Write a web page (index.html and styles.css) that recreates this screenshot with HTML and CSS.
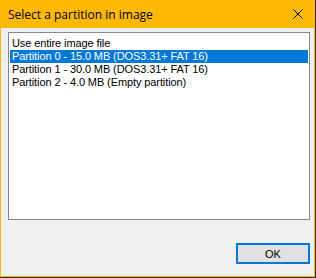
FILE: index.html
```html
<!DOCTYPE html>
<html lang="en">
<head>
    <meta charset="UTF-8">
    <title>Select a partition in image</title>
    <link rel="stylesheet" href="styles.css">
</head>
<body>
    <div class="window">
        <div class="titlebar">
            <span class="title">Select a partition in image</span>
            <span class="close">
                <svg width="10" height="10" viewBox="0 0 10 10">
                    <path d="M0.5 0.5 L9.5 9.5 M9.5 0.5 L0.5 9.5" stroke="#000" stroke-width="1" fill="none"/>
                </svg>
            </span>
        </div>
        <div class="client">
            <ul class="listbox">
                <li>Use entire image file</li>
                <li class="selected">Partition 0 - 15.0 MB (DOS3.31+ FAT 16)</li>
                <li>Partition 1 - 30.0 MB (DOS3.31+ FAT 16)</li>
                <li>Partition 2 - 4.0 MB (Empty partition)</li>
            </ul>
            <div class="buttons">
                <button class="button">OK</button>
            </div>
        </div>
    </div>
</body>
</html>
```

FILE: styles.css
```css
body {
    margin: 0;
    background-color: #2b2b2b;
    font-family: "Liberation Sans", Arial, sans-serif;
}
.window {
    width: 313px;
    height: 276px;
    border: 1px solid #ffb900;
    border-top: none;
    background-color: #f0f0f0;
    display: flex;
    flex-direction: column;
}
.titlebar {
    height: 28px;
    background-color: #ffb900;
    display: flex;
    align-items: center;
    justify-content: space-between;
    margin: 0 -1px;
}
.title {
    font-family: "Open Sans", sans-serif;
    font-size: 12px;
    color: #000;
    padding-left: 8px;
}
.close {
    width: 10px;
    height: 10px;
    margin-right: 12px;
    display: flex;
}
.client {
    flex: 1;
    display: flex;
    flex-direction: column;
    padding: 4px 4px 0 7px;
}
.listbox {
    list-style: none;
    margin: 0;
    padding: 4px 1px 2px;
    height: 180px;
    border: 1px solid #828790;
    background-color: #fff;
    font-size: 11px;
    letter-spacing: -0.1px;
}
.listbox li {
    height: 13px;
    line-height: 13px;
    padding-left: 2px;
    color: #000;
    white-space: nowrap;
}
.listbox li.selected {
    background-color: #0078d7;
    color: #fff;
}
.buttons {
    display: flex;
    justify-content: flex-end;
    padding-top: 23px;
}
.button {
    width: 74px;
    height: 21px;
    border: 2px solid #0078d7;
    background-color: #e1e1e1;
    font-family: "Liberation Sans", Arial, sans-serif;
    font-size: 11px;
    color: #000;
    padding: 0;
}
```
